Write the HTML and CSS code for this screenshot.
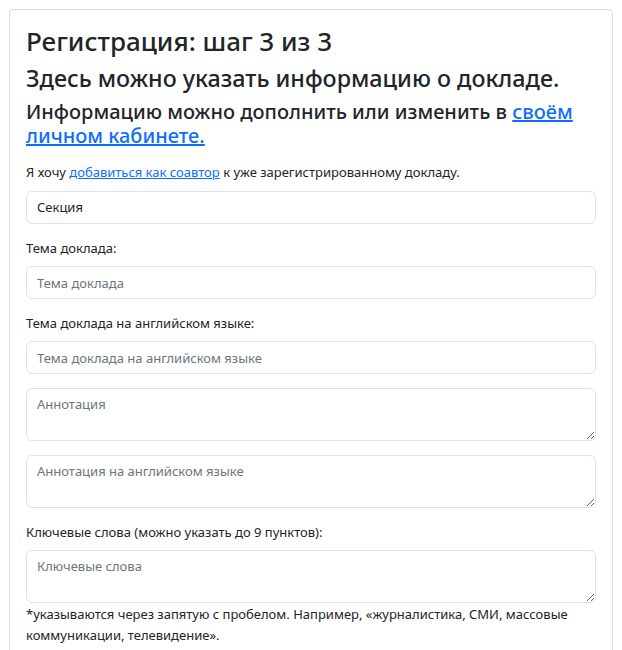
FILE: index.html
```html
<!DOCTYPE html>
<html lang="ru">
<head>
<meta charset="utf-8">
<title>Регистрация: шаг 3 из 3</title>
<link rel="stylesheet" href="styles.css">
</head>
<body>
<div class="page">
  <div class="card">
    <div class="card-body">
      <h2 class="title">Регистрация: шаг 3 из 3</h2>
      <h4 class="subtitle">Здесь можно указать информацию о докладе.</h4>
      <h5 class="note">Информацию можно дополнить или изменить в <a href="#">своём личном кабинете.</a></h5>
      <p class="coauthor">Я хочу <a href="#">добавиться как соавтор</a> к уже зарегистрированному докладу.</p>
      <div class="group">
        <div class="control value">Секция</div>
      </div>
      <div class="group">
        <label class="label">Тема доклада:</label>
        <input class="control" type="text" placeholder="Тема доклада">
      </div>
      <div class="group">
        <label class="label">Тема доклада на английском языке:</label>
        <input class="control" type="text" placeholder="Тема доклада на английском языке">
      </div>
      <div class="group">
        <textarea class="control area" placeholder="Аннотация"></textarea>
      </div>
      <div class="group">
        <textarea class="control area" placeholder="Аннотация на английском языке"></textarea>
      </div>
      <div class="group">
        <label class="label">Ключевые слова (можно указать до 9 пунктов):</label>
        <textarea class="control area" placeholder="Ключевые слова"></textarea>
        <div class="hint">*указываются через запятую с пробелом. Например, «журналистика, СМИ, массовые коммуникации, телевидение».</div>
      </div>
    </div>
  </div>
</div>
</body>
</html>
```

FILE: styles.css
```css
html { font-size: 14px; }
body {
  margin: 0;
  font-family: "Noto Sans", "Open Sans", sans-serif;
  color: #212529;
  background: #fff;
  line-height: 1.5;
}
.page { padding: 9px; }
.card {
  border: 1px solid #dcdcdc;
  border-radius: 4px;
  background: #fff;
}
.card-body { padding: 16px; display: flex; flex-direction: column; }
a { color: #0d6efd; text-decoration: underline; }
.title {
  margin: 0 0 7px;
  font-size: 26px;
  font-weight: 500;
  line-height: 31px;
}
.subtitle {
  margin: 0 0 8px;
  font-size: 23.3px;
  font-weight: 500;
  line-height: 28px;
}
.note {
  margin: 0 0 14px;
  font-size: 20px;
  font-weight: 500;
  line-height: 24px;
}
.coauthor {
  margin: 0 0 8px;
  font-size: 13px;
  line-height: 21px;
}
.group { display: flex; flex-direction: column; margin-bottom: 14px; }
.label { font-size: 13px; line-height: 21px; margin-bottom: 7px; }
.control {
  box-sizing: border-box;
  width: 100%;
  height: 33px;
  padding: 5px 10px;
  font: inherit;
  font-size: 13px;
  line-height: 21px;
  color: #495057;
  border: 1px solid #dee2e6;
  border-radius: 6px;
  background: #fff;
}
.control::placeholder { color: #6c757d; }
.value { color: #212529; }
.area { height: 53px; resize: both; }
.hint { margin-top: 1px; font-size: 13px; line-height: 21px; }
```
